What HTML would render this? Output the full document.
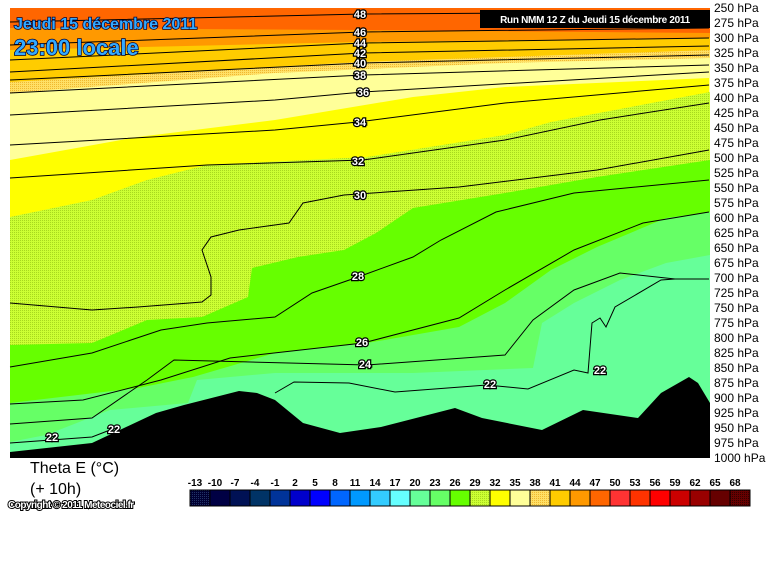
<!DOCTYPE html>
<html><head><meta charset="utf-8"><style>
body{margin:0;background:#fff;width:768px;height:575px;overflow:hidden;font-family:"Liberation Sans",Arial,sans-serif}
svg{display:block}
.l{font:bold 11px "Liberation Sans",sans-serif;fill:#fff;stroke:#000;stroke-width:2.5px;paint-order:stroke;text-anchor:middle}
.p{font:12px "Liberation Sans",sans-serif;fill:#000}
.c{fill:none;stroke:#000;stroke-width:1}
.lg{font:bold 10px "Liberation Sans",sans-serif;fill:#000;text-anchor:middle}
</style></head><body>
<svg width="768" height="575" viewBox="0 0 768 575" xmlns="http://www.w3.org/2000/svg">
<defs>
<pattern id="sg" width="2" height="2" patternUnits="userSpaceOnUse"><rect width="2" height="2" fill="#ccff33"/><rect width="1" height="1" fill="#a8d81e"/></pattern>
<pattern id="so" width="2" height="2" patternUnits="userSpaceOnUse"><rect width="2" height="2" fill="#ffe066"/><rect width="1" height="1" fill="#f0b830"/></pattern>
<pattern id="sb" width="2" height="2" patternUnits="userSpaceOnUse"><rect width="2" height="2" fill="#000033"/><rect width="1" height="1" fill="#223366"/></pattern>
<pattern id="sr" width="2" height="2" patternUnits="userSpaceOnUse"><rect width="2" height="2" fill="#660000"/><rect width="1" height="1" fill="#330000"/></pattern>
</defs>
<rect x="10" y="8" width="700" height="450" fill="#ff6600"/>
<polygon fill="#ff9900" points="10,28 360,30 710,33 710,458 10,458"/>
<polygon fill="#ffcc00" points="10,50 360,42 710,38 710,458 10,458"/>
<polygon fill="url(#so)" points="10,82 360,62 710,50 710,458 10,458"/>
<polygon fill="#ffff99" points="10,93 275,73 505,63 710,58 710,458 10,458"/>
<polygon fill="#ffff00" points="10,160 138,137 275,120 413,97 505,87 709,78 710,458 10,458"/>
<polygon fill="url(#sg)" points="10,217 92,200 147,180 207,165 367,157 505,135 551,122 710,92 710,458 10,458"/>
<polygon fill="#66ff00" points="10,345 92,343 147,320 202,317 248,297 252,268 298,257 344,250 376,233 413,208 505,193 597,177 710,160 710,458 10,458"/>
<polygon fill="#66ff66" points="10,403 138,388 193,377 275,353 367,343 459,327 505,303 551,270 597,247 666,218 710,212 710,458 10,458"/>
<polygon fill="#66ff99" points="10,442 46,435 110,410 188,403 197,380 275,373 413,373 533,368 542,323 574,303 620,280 666,263 710,255 710,458 10,458"/>
<polygon fill="#000" points="10,452 92,443 156,413 184,405 239,391 257,393 275,400 303,423 340,433 381,427 455,408 482,418 542,430 583,410 638,418 661,393 689,377 698,383 710,403 710,458 10,458"/>
<g class="c">
<polyline points="10,22 363,14 709,12"/>
<polyline points="10,45 363,32 709,28"/>
<polyline points="10,60 363,43 709,38"/>
<polyline points="10,72 363,53 709,46"/>
<polyline points="10,80 363,63 709,55"/>
<polyline points="10,93 363,75 709,65"/>
<polyline points="10,115 275,100 363,92 709,72"/>
<polyline points="10,145 275,130 358,122 505,103 709,85"/>
<polyline points="10,178 207,165 363,160 505,140 600,120 709,103"/>
<polyline points="10,303 92,310 138,307 202,302 211,295 211,277 202,250 211,237 239,230 289,223 303,203 344,195 459,187 597,170 709,150"/>
<polyline points="10,367 92,353 161,330 207,323 275,317 312,293 358,277 413,257 441,240 496,212 574,193 709,180"/>
<polyline points="10,404 83,400 161,380 230,358 363,343 459,318 505,290 574,250 643,223 709,212"/>
<polyline points="10,424 92,418 147,380 174,360 367,365 505,355 533,320 574,290 620,273 675,279 709,279"/>
<polyline points="10,443 92,437 110,430"/>
<polyline points="275,393 294,382 349,383 395,392 487,385 528,389 574,370 588,373 592,323 600,318 606,327 615,307 661,280 675,279"/>
</g>
<g class="l">
<text x="360" y="18">48</text><text x="360" y="36">46</text><text x="360" y="47">44</text><text x="360" y="57">42</text><text x="360" y="67">40</text><text x="360" y="79">38</text><text x="363" y="96">36</text><text x="360" y="126">34</text><text x="358" y="165">32</text><text x="360" y="199">30</text><text x="358" y="280">28</text><text x="362" y="346">26</text><text x="365" y="368">24</text><text x="490" y="388">22</text><text x="600" y="374">22</text><text x="52" y="441">22</text><text x="114" y="433">22</text>
</g>
<rect x="480" y="10" width="230" height="18" fill="#000"/>
<text x="595" y="23" style="font:bold 10px 'Liberation Sans',sans-serif;fill:#fff;text-anchor:middle;letter-spacing:-0.3px">Run NMM 12 Z du Jeudi 15 décembre 2011</text>
<text x="14" y="29" style="font:bold 16px 'Liberation Sans',sans-serif;fill:#33aaff;stroke:#000033;stroke-width:1.5px;paint-order:stroke">Jeudi 15 décembre 2011</text>
<text x="14" y="55" style="font:bold 22px 'Liberation Sans',sans-serif;fill:#33aaff;stroke:#000033;stroke-width:1.5px;paint-order:stroke">23:00 locale</text>
<g class="p">
<text x="714" y="12">250 hPa</text><text x="714" y="27">275 hPa</text><text x="714" y="42">300 hPa</text><text x="714" y="57">325 hPa</text><text x="714" y="72">350 hPa</text><text x="714" y="87">375 hPa</text><text x="714" y="102">400 hPa</text><text x="714" y="117">425 hPa</text><text x="714" y="132">450 hPa</text><text x="714" y="147">475 hPa</text><text x="714" y="162">500 hPa</text><text x="714" y="177">525 hPa</text><text x="714" y="192">550 hPa</text><text x="714" y="207">575 hPa</text><text x="714" y="222">600 hPa</text><text x="714" y="237">625 hPa</text><text x="714" y="252">650 hPa</text><text x="714" y="267">675 hPa</text><text x="714" y="282">700 hPa</text><text x="714" y="297">725 hPa</text><text x="714" y="312">750 hPa</text><text x="714" y="327">775 hPa</text><text x="714" y="342">800 hPa</text><text x="714" y="357">825 hPa</text><text x="714" y="372">850 hPa</text><text x="714" y="387">875 hPa</text><text x="714" y="402">900 hPa</text><text x="714" y="417">925 hPa</text><text x="714" y="432">950 hPa</text><text x="714" y="447">975 hPa</text><text x="714" y="462">1000 hPa</text>
</g>
<text x="30" y="473" style="font:16px 'Liberation Sans',sans-serif">Theta E (°C)</text>
<text x="30" y="494" style="font:16px 'Liberation Sans',sans-serif">(+ 10h)</text>
<text x="8" y="508" style="font:bold 10px 'Liberation Sans',sans-serif;fill:#fff;stroke:#000;stroke-width:2px;paint-order:stroke;letter-spacing:-0.5px">Copyright © 2011 Meteociel.fr</text>
<g stroke="#000" stroke-width="1">
<rect x="190" y="490" width="20" height="16" fill="url(#sb)"/><rect x="210" y="490" width="20" height="16" fill="#000044"/><rect x="230" y="490" width="20" height="16" fill="#001155"/><rect x="250" y="490" width="20" height="16" fill="#003366"/><rect x="270" y="490" width="20" height="16" fill="#003399"/><rect x="290" y="490" width="20" height="16" fill="#0000cc"/><rect x="310" y="490" width="20" height="16" fill="#0000ff"/><rect x="330" y="490" width="20" height="16" fill="#0066ff"/><rect x="350" y="490" width="20" height="16" fill="#0099ff"/><rect x="370" y="490" width="20" height="16" fill="#33ccff"/><rect x="390" y="490" width="20" height="16" fill="#66ffff"/><rect x="410" y="490" width="20" height="16" fill="#66ff99"/><rect x="430" y="490" width="20" height="16" fill="#66ff66"/><rect x="450" y="490" width="20" height="16" fill="#66ff00"/><rect x="470" y="490" width="20" height="16" fill="url(#sg)"/><rect x="490" y="490" width="20" height="16" fill="#ffff00"/><rect x="510" y="490" width="20" height="16" fill="#ffff99"/><rect x="530" y="490" width="20" height="16" fill="url(#so)"/><rect x="550" y="490" width="20" height="16" fill="#ffcc00"/><rect x="570" y="490" width="20" height="16" fill="#ff9900"/><rect x="590" y="490" width="20" height="16" fill="#ff6600"/><rect x="610" y="490" width="20" height="16" fill="#ff3333"/><rect x="630" y="490" width="20" height="16" fill="#ff3300"/><rect x="650" y="490" width="20" height="16" fill="#ff0000"/><rect x="670" y="490" width="20" height="16" fill="#cc0000"/><rect x="690" y="490" width="20" height="16" fill="#990000"/><rect x="710" y="490" width="20" height="16" fill="#660000"/><rect x="730" y="490" width="20" height="16" fill="url(#sr)"/>
</g>
<g class="lg">
<text x="195" y="486">-13</text><text x="215" y="486">-10</text><text x="235" y="486">-7</text><text x="255" y="486">-4</text><text x="275" y="486">-1</text><text x="295" y="486">2</text><text x="315" y="486">5</text><text x="335" y="486">8</text><text x="355" y="486">11</text><text x="375" y="486">14</text><text x="395" y="486">17</text><text x="415" y="486">20</text><text x="435" y="486">23</text><text x="455" y="486">26</text><text x="475" y="486">29</text><text x="495" y="486">32</text><text x="515" y="486">35</text><text x="535" y="486">38</text><text x="555" y="486">41</text><text x="575" y="486">44</text><text x="595" y="486">47</text><text x="615" y="486">50</text><text x="635" y="486">53</text><text x="655" y="486">56</text><text x="675" y="486">59</text><text x="695" y="486">62</text><text x="715" y="486">65</text><text x="735" y="486">68</text>
</g>
</svg>
</body></html>
